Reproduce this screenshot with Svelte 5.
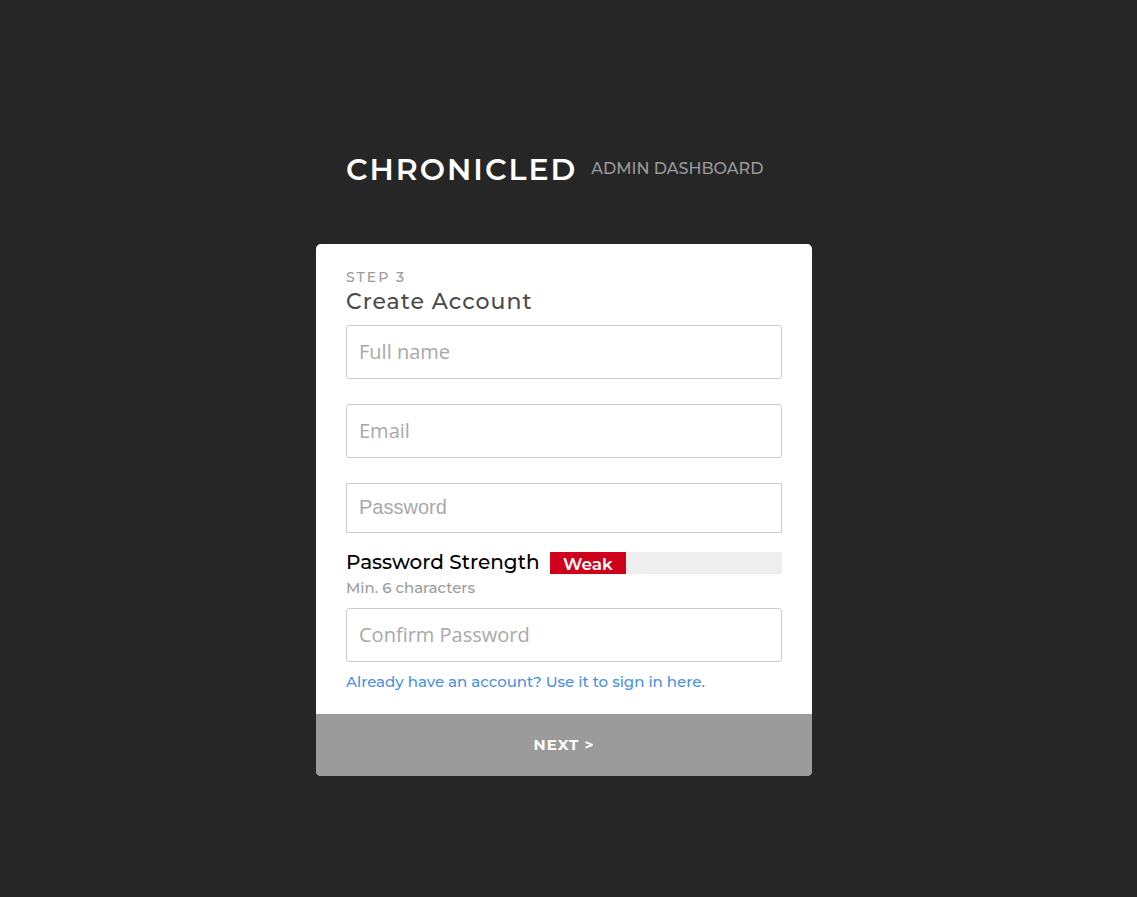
<script>
  let name = $state('');
  let email = $state('');
  let password = $state('');
  let confirm = $state('');
  let strength = $state({ label: 'Weak', percent: 33 });
</script>

<main>
  <header>
    <h1>CHRONICLED</h1>
    <span class="sub">ADMIN DASHBOARD</span>
  </header>
  <form onsubmit={(e) => e.preventDefault()}>
    <div class="body">
      <p class="step">STEP 3</p>
      <h2>Create Account</h2>
      <input class="field" type="text" aria-label="Full name" placeholder="Full name" bind:value={name} />
      <input class="field" type="email" aria-label="Email" placeholder="Email" bind:value={email} />
      <input class="field password" type="password" aria-label="Password" placeholder="Password" bind:value={password} />
      <div class="strength">
        <span>Password Strength</span>
        <div class="track"><div class="fill" style="width: {strength.percent}%">{strength.label}</div></div>
      </div>
      <p class="hint">Min. 6 characters</p>
      <input class="field confirm" type="password" aria-label="Confirm Password" placeholder="Confirm Password" bind:value={confirm} />
      <a href="#signin">Already have an account? Use it to sign in here.</a>
    </div>
    <button type="submit">NEXT &gt;</button>
  </form>
</main>

<style>
  :global(body) {
    margin: 0;
    padding-right: 9px;
    background: #262626;
  }
  * {
    box-sizing: border-box;
  }
  main {
    min-height: 100vh;
    width: 100%;
    max-width: 496px;
    margin: 0 auto;
    padding: 144px 0 64px;
    font-family: Montserrat, Inter, sans-serif;
  }
  header {
    display: flex;
    align-items: center;
    gap: 14px;
    height: 50px;
    margin: 0 30px 50px;
    white-space: nowrap;
  }
  h1 {
    margin: 0;
    color: #fff;
    font-size: 30px;
    font-weight: 600;
    letter-spacing: 2px;
  }
  .sub {
    color: #9b9b9b;
    font-size: 16px;
    line-height: 20px;
    font-weight: 500;
  }
  form {
    overflow: hidden;
    border-radius: 5px;
    background: #fff;
  }
  .body {
    display: flex;
    flex-direction: column;
    padding: 24px 30px 21px;
  }
  p, h2 {
    margin: 0;
  }
  .step {
    color: #9b9b9b;
    font-size: 14px;
    line-height: 18px;
    font-weight: 500;
    letter-spacing: 2px;
  }
  h2 {
    margin-bottom: 7px;
    color: #4a4a4a;
    font-size: 22px;
    line-height: 32px;
    font-weight: 500;
    letter-spacing: 1px;
  }
  .field {
    width: 100%;
    height: 54px;
    margin: 0 0 25px;
    padding: 0 12px 2px;
    border: 1px solid #ccc;
    border-radius: 3px;
    background: #fff;
    color: #4a4a4a;
    font: 20px "Open Sans", sans-serif;
  }
  .field::placeholder {
    color: #a9a9a9;
    opacity: 1;
  }
  .password {
    height: 50px;
    margin-bottom: 16px;
    border-radius: 0;
    font-family: "Liberation Sans", Arial, sans-serif;
  }
  .strength {
    display: flex;
    align-items: center;
    gap: 10px;
    height: 28px;
    color: #000;
    font-size: 20px;
    line-height: 22px;
    white-space: nowrap;
  }
  .strength span {
    padding-bottom: 2px;
    font-weight: 500;
  }
  .track {
    flex: 1;
    background: #eee;
  }
  .fill {
    height: 22px;
    background: #d0021b;
    color: #fff;
    font-size: 17px;
    line-height: 24px;
    font-weight: 600;
    text-align: center;
  }
  .hint {
    margin-bottom: 9px;
    color: #9b9b9b;
    font-size: 15px;
    line-height: 22px;
    font-weight: 500;
  }
  .confirm {
    margin-bottom: 9px;
  }
  a {
    color: #4a90e2;
    font-size: 15px;
    line-height: 22px;
    font-weight: 500;
    text-decoration: none;
  }
  button {
    display: block;
    width: 100%;
    height: 62px;
    padding: 0 0 2px;
    border: 0;
    background: #9b9b9b;
    color: #fff;
    font-family: inherit;
    font-size: 15px;
    font-weight: 700;
    letter-spacing: 1px;
  }
</style>
